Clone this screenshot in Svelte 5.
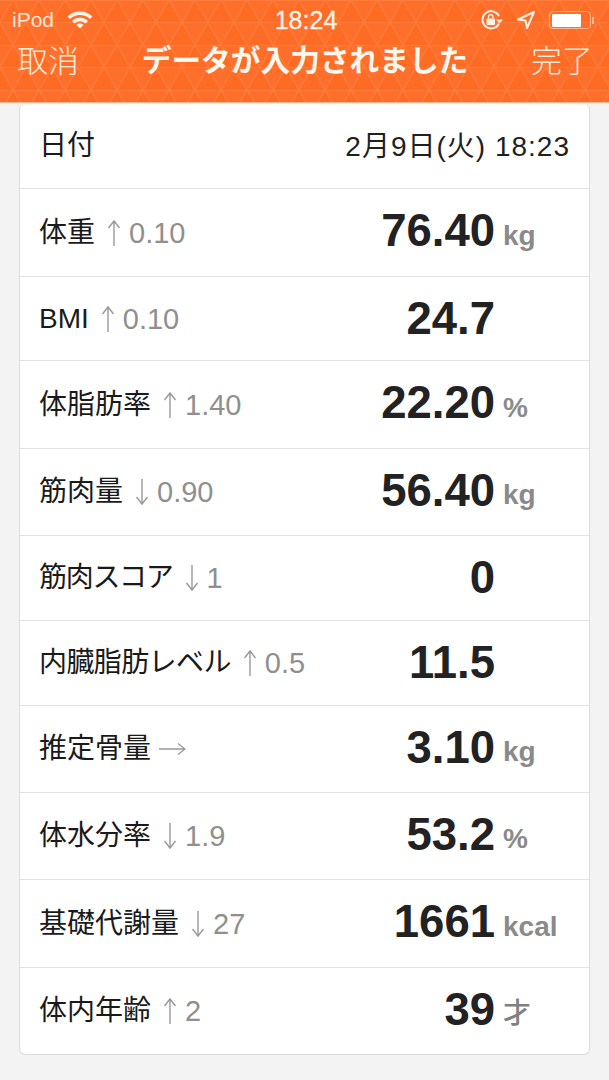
<script>
  const rows = [
    { h: 88, label: '体重', dir: 'up', delta: '0.10', num: '76.40', unit: 'kg' },
    { h: 84, label: 'BMI', dir: 'up', delta: '0.10', num: '24.7', unit: '' },
    { h: 88, label: '体脂肪率', dir: 'up', delta: '1.40', num: '22.20', unit: '%' },
    { h: 87, label: '筋肉量', dir: 'down', delta: '0.90', num: '56.40', unit: 'kg' },
    { h: 85, label: '筋肉スコア', dir: 'down', delta: '1', num: '0', unit: '', track: -1.3 },
    { h: 85, label: '内臓脂肪レベル', dir: 'up', delta: '0.5', num: '11.5', unit: '', track: -0.6 },
    { h: 87, label: '推定骨量', dir: 'right', delta: '', num: '3.10', unit: 'kg' },
    { h: 87, label: '体水分率', dir: 'down', delta: '1.9', num: '53.2', unit: '%' },
    { h: 88, label: '基礎代謝量', dir: 'down', delta: '27', num: '1661', unit: 'kcal' },
    { h: 87, label: '体内年齢', dir: 'up', delta: '2', num: '39', unit: '才' }
  ];
</script>

<div class="page">
  <header class="head">
    <svg class="tex" width="609" height="102" aria-hidden="true">
      <defs>
        <pattern id="tri" width="26" height="45" patternUnits="userSpaceOnUse">
          <path d="M13 0 L0 22.500 H26 Z M0 22.500 L-13 45 H13 Z M26 22.500 L13 45 H39 Z" fill="#f86212" fill-opacity=".28" />
          <path d="M13 0 L0 22.500 M13 0 L26 22.500 M0 22.500 L13 45 M26 22.500 L13 45 M0 22.500 H26 M0 0.500 H26" fill="none" stroke="#ff9c63" stroke-opacity=".28" stroke-width="1.200" />
        </pattern>
      </defs>
      <rect width="609" height="102" fill="url(#tri)" />
    </svg>

    <div class="status">
      <div class="st-left">
        <span class="ipod">iPod</span>
        <svg class="wifi" width="28" height="20" viewBox="0 0 28 20">
          <path d="M1.500 7.500 A18 18 0 0 1 26.500 7.500 L24 10 A14.500 14.500 0 0 0 4 10 Z" />
          <path d="M6 12 A11.500 11.500 0 0 1 22 12 L19.500 14.500 A8 8 0 0 0 8.500 14.500 Z" />
          <path d="M10.500 16 A5 5 0 0 1 17.500 16 L14 19.500 Z" />
        </svg>
      </div>
      <span class="time">18:24</span>
      <div class="st-right">
        <svg width="24" height="22" viewBox="0 0 24 22">
          <path d="M20 14.500 A8.700 8.700 0 1 1 20 7" fill="none" stroke="#fff3e8" stroke-width="1.800" />
          <path d="M17 10.500 H24 L20.500 14.500 Z" fill="#fff3e8" />
          <rect x="7.500" y="9.500" width="8.500" height="6.500" rx="1" fill="#fff3e8" />
          <path d="M9.500 9.500 V7.800 A2.200 2.200 0 0 1 14 7.800 V9.500" fill="none" stroke="#fff3e8" stroke-width="1.300" />
        </svg>
        <svg width="20" height="20" viewBox="0 0 20 20">
          <path d="M18 2 L2 9.500 L9.500 10.500 L11 18 Z" fill="none" stroke="#fff3e8" stroke-width="2" stroke-linejoin="round" />
        </svg>
        <div class="batt"><div class="fill"></div></div>
        <div class="nub"></div>
      </div>
    </div>

    <nav class="nav">
      <span class="btn">取消</span>
      <span class="title">データが入力されました</span>
      <span class="btn">完了</span>
    </nav>
  </header>

  <main class="card">
    <div class="row first">
      <span class="name">日付</span>
      <span class="date">2月9日(火) 18:23</span>
    </div>
    {#each rows as r}
      <div class="row" style="height:{r.h}px">
        <div class="left">
          <span class="name" class:latin={r.label === 'BMI'} style="letter-spacing:{r.track ?? 0}px">{r.label}</span>
          {#if r.dir === 'up'}
            <svg class="arrow" width="16" height="28" viewBox="0 0 16 28"><path d="M8 27 V2 M2.500 9 L8 2 L13.500 9" /></svg>
          {:else if r.dir === 'down'}
            <svg class="arrow" width="16" height="28" viewBox="0 0 16 28"><path d="M8 1 V26 M2.500 19 L8 26 L13.500 19" /></svg>
          {:else}
            <svg class="arrow wide" width="28" height="16" viewBox="0 0 28 16"><path d="M1 8 H27 M20 2.500 L27 8 L20 13.500" /></svg>
          {/if}
          {#if r.delta}<span class="delta">{r.delta}</span>{/if}
        </div>
        <span class="num" class:lifted={r.unit}>{r.num}</span>
        <span class="unit" class:cjk={r.unit === '才'}>{r.unit}</span>
      </div>
    {/each}
  </main>
</div>

<style>
  :global(body) {
    margin: 0;
    background: #f3f3f3;
  }
  .page {
    width: 609px;
    height: 1080px;
    overflow: hidden;
    background: #f3f3f3;
    font-family: "Liberation Sans", "Noto Sans CJK JP", sans-serif;
  }
  .head {
    position: relative;
    height: 102px;
    background: #ff6f2c;
    color: #fff3e8;
    border-bottom: 1px solid #fbb593;
    box-sizing: content-box;
    overflow: hidden;
  }
  .tex {
    position: absolute;
    inset: 0;
  }
  .status {
    position: relative;
    height: 40px;
    display: grid;
    grid-template-columns: 1fr auto 1fr;
    align-items: center;
    padding: 0 12px;
  }
  .st-left {
    display: flex;
    align-items: center;
    gap: 12px;
  }
  .ipod {
    font-size: 21px;
    color: #ffe6d6;
  }
  .wifi {
    fill: #fff3e8;
    margin-top: -3px;
  }
  .time {
    font-size: 25px;
    margin-left: 3px;
    color: #fff3e8;
    -webkit-text-stroke: 0.3px #fff3e8;
  }
  .st-right {
    display: flex;
    align-items: center;
    justify-content: flex-end;
    gap: 13px;
    padding-right: 3px;
  }
  .batt {
    width: 42px;
    height: 18px;
    box-sizing: border-box;
    border: 1.500px solid #ffb68c;
    border-radius: 4px;
    padding: 1.500px;
    margin-right: -12px;
  }
  .fill {
    width: 29px;
    height: 100%;
    background: #fff;
    border-radius: 1px;
  }
  .nub {
    width: 2px;
    height: 7px;
    background: #ffb68c;
  }
  .nav {
    position: relative;
    display: flex;
    justify-content: space-between;
    align-items: center;
    box-sizing: border-box;
    height: 40px;
    padding: 0 16px 4px 17px;
  }
  .btn {
    font-size: 31px;
    font-weight: 300;
    color: #ffeadb;
  }
  .title {
    font-size: 29.700px;
    font-weight: 700;
    color: #fff6ee;
  }
  .card {
    margin: 1px 19px 0;
    box-sizing: border-box;
    height: 951px;
    background: #fff;
    border: 1px solid #dcdcdc;
    border-top: 0;
    border-radius: 6px;
  }
  .row {
    display: flex;
    align-items: center;
    box-sizing: border-box;
    padding-left: 19px;
    border-top: 1px solid #e3e3e3;
  }
  .row.first {
    height: 84px;
    border-top: 0;
    justify-content: space-between;
    padding-right: 19px;
  }
  .left {
    flex: 1;
    display: flex;
    align-items: center;
    min-width: 0;
  }
  .name {
    margin-bottom: 6px;
    font-size: 28px;
    color: #1a1a1a;
    white-space: nowrap;
  }
  .name.latin {
    margin-bottom: 0;
  }
  .date {
    margin-bottom: 4px;
    font-size: 28px;
    letter-spacing: 1px;
    color: #1f1f1f;
    white-space: nowrap;
  }
  .arrow {
    flex: none;
    margin: 0 0 0 11px;
  }
  .arrow path {
    fill: none;
    stroke: #9a9a9a;
    stroke-width: 1.400;
  }
  .arrow.wide {
    margin-left: 7px;
  }
  .delta {
    margin: 1px 0 0 7px;
    font-size: 29px;
    color: #8f8f8f;
    white-space: nowrap;
  }
  .num {
    font-size: 45.500px;
    font-weight: 700;
    color: #222;
    white-space: nowrap;
  }
  .num.lifted {
    margin-bottom: 3px;
  }
  .unit {
    flex: none;
    width: 94px;
    box-sizing: border-box;
    padding: 6px 0 0 8px;
    font-size: 28px;
    font-weight: 700;
    color: #8a8a8a;
  }
  .unit.cjk {
    padding-top: 0;
    font-weight: 500;
    color: #808080;
  }
</style>
